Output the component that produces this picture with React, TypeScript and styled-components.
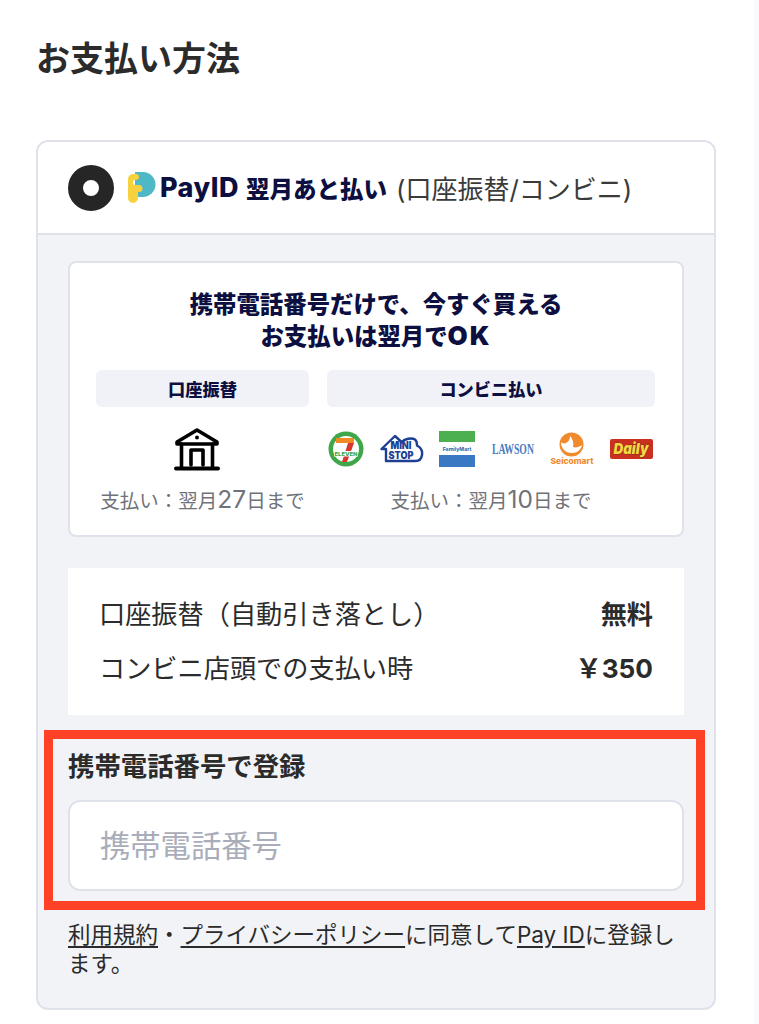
import React from "react";
import styled, { createGlobalStyle } from "styled-components";

const GlobalStyle = createGlobalStyle`
  html, body {
    margin: 0;
    padding: 0;
    background: #fff;
    font-family: "Inter", "Noto Sans CJK JP", sans-serif;
    color: #2b2b2b;
  }
  * { box-sizing: border-box; }
`;

const BankIcon = () => (
  <svg width="46" height="44" viewBox="0 0 46 44" fill="none" stroke="#000" strokeWidth="3.6" strokeLinecap="round" strokeLinejoin="round">
    <path d="M3 15 23 3l20 12v2H3z" />
    <circle cx="23" cy="10.500" r="2" fill="#000" stroke="none" />
    <path d="M7.500 17v23M38.500 17v23" />
    <path d="M17 38V23h12v15" />
    <path d="M2 41.500h42" strokeWidth="4" />
  </svg>
);

const SevenEleven = () => (
  <svg width="36" height="36" viewBox="0 0 36 36">
    <circle cx="18" cy="18" r="17.500" fill="#3fa64a" />
    <circle cx="18" cy="18" r="13" fill="#fff" />
    <path d="M8 7h18v5H8z" fill="#f08a24" />
    <path d="M20 12h6l-7 19h-5z" fill="#d8382c" />
    <rect x="6" y="20" width="24" height="5.500" fill="#fff" />
    <text x="18" y="24.800" fontSize="5" fontWeight="800" textAnchor="middle" fill="#3fa64a" fontFamily="Inter" textLength="23" lengthAdjust="spacingAndGlyphs">ELEVEN</text>
  </svg>
);

const MiniStop = () => (
  <svg width="44" height="30" viewBox="0 0 44 30">
    <path d="M1.500 15 15 2l7 6.500c2-4 10-5 13-3 2 1.500 2 4 2 6 4 2 5.500 6 5 9.500-.5 3.500-3 6-6.500 6H6V15z" fill="#fff" stroke="#1d3f94" strokeWidth="2.400" strokeLinejoin="round" />
    <text x="21" y="15" fontSize="10" fontWeight="900" textAnchor="middle" fill="#1d3f94" fontFamily="Inter" textLength="21" lengthAdjust="spacingAndGlyphs">MINI</text>
    <text x="21" y="24.500" fontSize="10" fontWeight="900" textAnchor="middle" fill="#1d3f94" fontFamily="Inter" textLength="25" lengthAdjust="spacingAndGlyphs">STOP</text>
  </svg>
);

const FamilyMart = () => (
  <svg width="36" height="36" viewBox="0 0 36 36">
    <rect width="36" height="11" fill="#4caf50" />
    <rect y="24" width="36" height="12" fill="#3a78c3" />
    <text x="18" y="20" fontSize="5.200" fontWeight="700" textAnchor="middle" fill="#2f5f9e" fontFamily="Inter">FamilyMart</text>
  </svg>
);

const Lawson = () => (
  <svg width="44" height="16" viewBox="0 0 44 16">
    <g transform="scale(0.645 1)">
      <text x="34" y="13" fontSize="15" fontWeight="700" textAnchor="middle" fill="#4a7cc4" fontFamily="Liberation Serif">LAWSON</text>
    </g>
  </svg>
);

const Seicomart = () => (
  <svg width="44" height="34" viewBox="0 0 44 34">
    <circle cx="21.500" cy="12.500" r="12" fill="#f08a2c" />
    <path d="M11 10c0 8 6 11 11 11s9-3 10-8c-3 2-6 3-9 2 1-4 0-8-3-11 0 4-2 6-4 7-2 1-4 0-5-1z" fill="#fff" />
    <text x="22" y="32" fontSize="7.500" fontWeight="800" textAnchor="middle" fill="#ef8a30" fontFamily="Inter" textLength="43" lengthAdjust="spacingAndGlyphs">Seicomart</text>
  </svg>
);

const Daily = () => (
  <svg width="43" height="20" viewBox="0 0 43 20">
    <rect width="43" height="20" rx="2" fill="#c9301f" />
    <text x="21" y="15" fontSize="15" fontWeight="900" fontStyle="italic" textAnchor="middle" fill="#f5d742" stroke="#4a2a10" strokeWidth="0.6" paintOrder="stroke" fontFamily="Inter" textLength="35" lengthAdjust="spacingAndGlyphs">Daily</text>
  </svg>
);

const PayMark = () => (
  <svg width="28" height="31" viewBox="0 0 28 31">
    <path d="M7 0h8a12.500 12.500 0 0 1 0 25H7z" fill="#4fb8c6" />
    <path d="M0 7a5 5 0 0 1 5-5h3a3 3 0 0 1 0 6h-.5a2.500 2.500 0 0 0 0 5H11a3.500 3.500 0 0 1 0 7h-1v6a5 5 0 0 1-10 0z" fill="#f8d23e" />
  </svg>
);

const App = () => (
  <>
    <GlobalStyle />
    <Page>
      <Title>お支払い方法</Title>
      <Card>
        <CardHeader>
          <Radio />
          <LogoRow>
            <PayMark />
            <PayWord>PayID</PayWord>
            <PayLater>翌月あと払い</PayLater>
            <PayNote>(口座振替/コンビニ)</PayNote>
          </LogoRow>
        </CardHeader>
        <CardBody>
          <Promo>
            <PromoTitle>
              携帯電話番号だけで、今すぐ買える
              <br />
              お支払いは翌月で<PromoLatin>OK</PromoLatin>
            </PromoTitle>
            <Methods>
              <Method>
                <MethodLabel>口座振替</MethodLabel>
                <MethodIcons $bank>
                  <BankIcon />
                </MethodIcons>
                <Due>
                  支払い：翌月<DueNum>27</DueNum>日まで
                </Due>
              </Method>
              <Method>
                <MethodLabel>コンビニ払い</MethodLabel>
                <MethodIcons>
                  <SevenEleven />
                  <MiniStop />
                  <FamilyMart />
                  <Lawson />
                  <Seicomart />
                  <Daily />
                </MethodIcons>
                <Due>
                  支払い：翌月<DueNum>10</DueNum>日まで
                </Due>
              </Method>
            </Methods>
          </Promo>
          <Fees>
            <FeeRow>
              <span>口座振替（自動引き落とし）</span>
              <FeeValue>無料</FeeValue>
            </FeeRow>
            <FeeRow>
              <span>コンビニ店頭での支払い時</span>
              <FeeValue>￥350</FeeValue>
            </FeeRow>
          </Fees>
          <Register>
            <Highlight />
            <RegisterLabel>携帯電話番号で登録</RegisterLabel>
            <PhoneInput placeholder="携帯電話番号" />
          </Register>
          <Terms>
            <TermsLink>利用規約</TermsLink>・<TermsLink>プライバシーポリシー</TermsLink>に同意して<TermsLink>Pay ID</TermsLink>に登録します。
          </Terms>
        </CardBody>
      </Card>
    </Page>
  </>
);

const Page = styled.main`
  width: 759px;
  height: 1024px;
  overflow: hidden;
  padding: 36px 43px 0 36px;
  border-right: 5px solid #f8f9fb;
`;

const Title = styled.h1`
  margin: 0 0 59px;
  font-size: 34px;
  line-height: 45px;
  font-weight: 700;
  color: #2b2b2b;
`;

const Card = styled.section`
  width: 680px;
  height: 870px;
  border: 2px solid #dfe2ea;
  border-radius: 12px;
  overflow: hidden;
  background: #f1f3f7;
`;

const CardHeader = styled.div`
  height: 93px;
  padding: 0 30px;
  display: flex;
  align-items: center;
  gap: 14px;
  background: #fff;
  border-bottom: 2px solid #dfe2ea;
`;

const Radio = styled.span`
  width: 46px;
  height: 46px;
  flex: none;
  border-radius: 50%;
  border: 15px solid #262626;
  background: #fff;
`;

const LogoRow = styled.div`
  display: flex;
  align-items: center;
  white-space: nowrap;
`;

const PayWord = styled.span`
  margin-left: 4px;
  font-size: 27px;
  font-weight: 800;
  color: #0c0f3f;
  letter-spacing: 0.5px;
`;

const PayLater = styled.span`
  margin-left: 7px;
  font-size: 23.500px;
  font-weight: 900;
  color: #0c0f3f;
`;

const PayNote = styled.span`
  margin-left: 9px;
  font-size: 26px;
  color: #3a3a3a;
`;

const CardBody = styled.div`
  padding: 26px 30px 0;
`;

const Promo = styled.div`
  height: 276px;
  padding: 26px 26px 0;
  background: #fff;
  border: 2px solid #dfe2ea;
  border-radius: 8px;
`;

const PromoTitle = styled.h2`
  margin: 0 0 17px;
  text-align: center;
  font-size: 23.400px;
  line-height: 32px;
  font-weight: 900;
  color: #0c0f3f;
`;

const PromoLatin = styled.span`
  font-size: 26px;
  line-height: 1;
  letter-spacing: 2px;
`;

const Methods = styled.div`
  display: grid;
  grid-template-columns: 213px 328px;
  gap: 18px;
`;

const Method = styled.div`
  display: flex;
  flex-direction: column;
  align-items: center;
`;

const MethodLabel = styled.div`
  width: 100%;
  height: 37px;
  display: flex;
  align-items: center;
  justify-content: center;
  background: #f1f2f7;
  border-radius: 6px;
  font-size: 17.200px;
  font-weight: 900;
  color: #0c0f3f;
`;

const MethodIcons = styled.div<{ $bank?: boolean }>`
  width: 100%;
  height: 44px;
  margin-top: 20px;
  padding: ${({ $bank }) => ($bank ? "0 12px 0 0" : "0 2px 0 1px")};
  display: flex;
  align-items: center;
  justify-content: ${({ $bank }) => ($bank ? "center" : "space-between")};
`;

const Due = styled.div`
  margin-top: 16px;
  font-size: 19.500px;
  line-height: 28px;
  color: #6f7278;
`;

const DueNum = styled.span`
  font-size: 24.500px;
  line-height: 1;
`;

const Fees = styled.div`
  margin-top: 31px;
  height: 147px;
  padding: 18px 31px 0 31px;
  background: #fff;
`;

const FeeRow = styled.div`
  height: 54px;
  display: flex;
  align-items: center;
  justify-content: space-between;
  font-size: 26.200px;
  color: #2b2b2b;
`;

const FeeValue = styled.span`
  font-weight: 700;
`;

const Register = styled.div`
  position: relative;
  padding-top: 33px;
`;

const Highlight = styled.div`
  position: absolute;
  top: 15px;
  bottom: -19px;
  left: -24px;
  right: -21px;
  border: 9px solid #ff4125;
  pointer-events: none;
`;

const RegisterLabel = styled.div`
  font-size: 26.400px;
  line-height: 36px;
  font-weight: 700;
  color: #2b2b2b;
`;

const PhoneInput = styled.input`
  display: block;
  width: 100%;
  height: 91px;
  margin-top: 16px;
  padding: 0 30px;
  background: #fff;
  border: 2px solid #dfe2ea;
  border-radius: 12px;
  outline: none;
  font-family: inherit;
  font-size: 30.300px;
  &::placeholder {
    color: #a9adb9;
    opacity: 1;
  }
`;

const Terms = styled.p`
  margin: 29px 0 0;
  font-size: 22.500px;
  line-height: 29px;
  color: #2b2b2b;
`;

const TermsLink = styled.span`
  text-decoration: underline;
  text-underline-offset: 3px;
`;

export default App;
